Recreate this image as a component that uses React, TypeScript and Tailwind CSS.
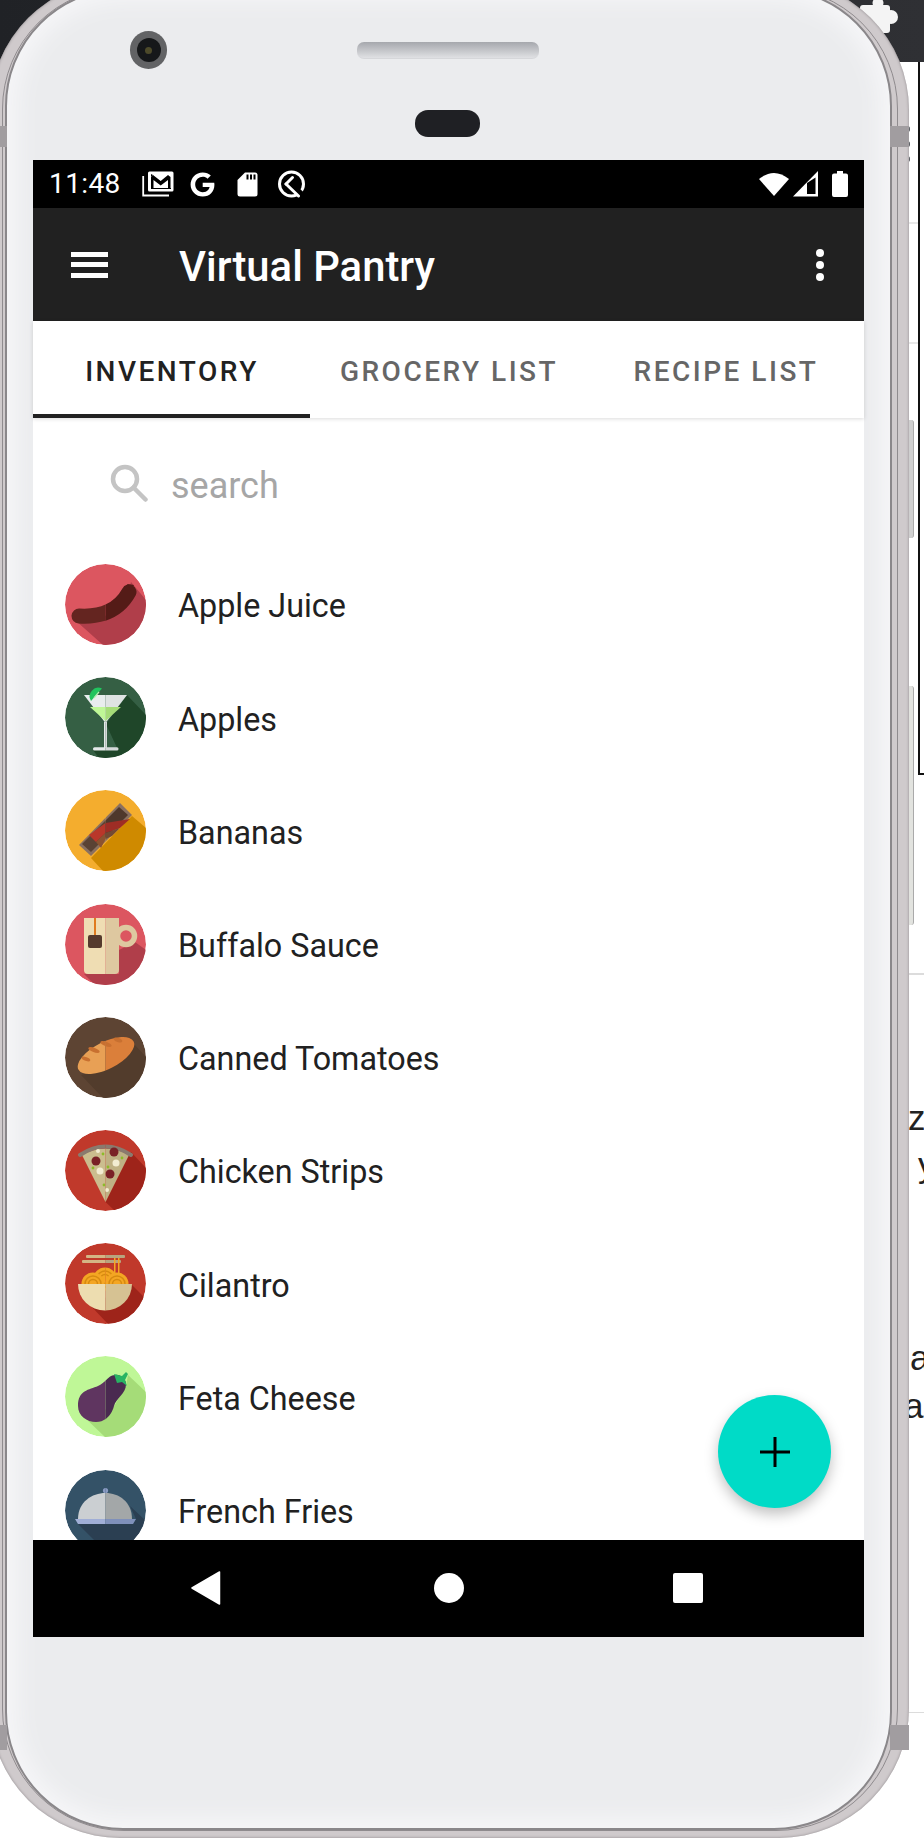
import React from "react";
import { FaGoogle } from "react-icons/fa";

const Flat = ({ id, bg, shadow, art }: { id: string; bg: string; shadow: string; art: (r: boolean) => React.ReactNode }) => (
  <svg width="81" height="81" viewBox="0 0 81 81" className="shrink-0">
    <defs>
      <clipPath id={`c-${id}`}><circle cx="40.5" cy="40.5" r="40.5" /></clipPath>
      <clipPath id={`r-${id}`}><rect x="40.5" y="0" width="41" height="81" /></clipPath>
      <clipPath id={`l-${id}`}><rect x="0" y="0" width="40.5" height="81" /></clipPath>
    </defs>
    <g clipPath={`url(#c-${id})`}>
      <circle cx="40.5" cy="40.5" r="40.5" fill={bg} />
      <polygon points={shadow} fill={bgShadow(bg)} />
      <g clipPath={`url(#l-${id})`}>{art(false)}</g>
      <g clipPath={`url(#r-${id})`}>{art(true)}</g>
    </g>
  </svg>
);

function bgShadow(bg: string) {
  const m: Record<string, string> = {
    "#dc5660": "#b03e4a",
    "#355f44": "#1f4629",
    "#f4ad2e": "#cf8a00",
    "#5d4433": "#523c2c",
    "#c0392b": "#9e241a",
    "#bff797": "#a5dc78",
    "#345267": "#2b3f52",
  };
  return m[bg];
}

const items: { name: string; icon: React.ReactNode }[] = [
  {
    name: "Apple Juice",
    icon: (
      <Flat id="a" bg="#dc5660" shadow="10,56 38,81 81,81 81,36 66,18 60,40 30,58" art={(r) => (
        <g>
          <path d="M14 52 C 30 53, 52 50, 64 28" fill="none" stroke={r ? "#541b17" : "#642520"} strokeWidth="15" strokeLinecap="round" />
          <polygon points="7,54 10,46 15,50" fill={r ? "#541b17" : "#642520"} />
          <polygon points="62,20 69,21 66,27" fill={r ? "#541b17" : "#642520"} />
        </g>
      )} />
    ),
  },
  {
    name: "Apples",
    icon: (
      <Flat id="b" bg="#355f44" shadow="62,18 81,38 81,81 34,81 28,73 53,73 41,47" art={(r) => (
        <g>
          <polygon points="19,18 62,18 40.5,46" fill={r ? "#dfe3e3" : "#e9edee"} />
          <polygon points="25,30 56,30 40.5,44" fill={r ? "#a5dc78" : "#bff797"} />
          <rect x="39" y="45" width="3" height="26" fill={r ? "#d5d9da" : "#e5e9ea"} />
          <rect x="28" y="70.3" width="25.5" height="3.2" rx="1.5" fill={r ? "#d5d9da" : "#e5e9ea"} />
          <path d="M37 11.5 A 8.7 8.7 0 0 0 26 24 Z" fill="#21c45e" />
          <path d="M34 15 L29 21" stroke="#b5efb0" strokeWidth="1.2" />
        </g>
      )} />
    ),
  },
  {
    name: "Bananas",
    icon: (
      <Flat id="c" bg="#f4ad2e" shadow="67,26 81,38 81,81 38,81 26,68" art={(r) => (
        <g>
          <polygon points="55,13 67,25 26,66 14,55" fill="#8a7060" />
          <polygon points="54,17 63,25 26,62 17,54" fill={r ? "#4f382c" : "#5a4234"} />
          <polygon points="24,45 40.5,33 65,29 55,38 40.5,43 31,52" fill={r ? "#9e2d25" : "#b9372a"} />
          <polygon points="31,52 40.5,43 55,38 47,46 40.5,49 36,58" fill={r ? "#734a33" : "#8c5330"} />
        </g>
      )} />
    ),
  },
  {
    name: "Buffalo Sauce",
    icon: (
      <Flat id="d" bg="#dc5660" shadow="70,38 81,46 81,81 30,81 19,70 54,70 54,46" art={(r) => (
        <g>
          <circle cx="61" cy="32" r="8.5" fill="none" stroke="#dec8a0" strokeWidth="5.5" />
          <path d="M19 14 H54 V66 A4 4 0 0 1 50 70 H23 A4 4 0 0 1 19 66 Z" fill={r ? "#dec8a0" : "#efddb3"} />
          <rect x="29" y="14" width="2" height="18" fill="#e07b1f" />
          <rect x="23" y="31" width="14" height="13" rx="2" fill="#553a2d" />
        </g>
      )} />
    ),
  },
  {
    name: "Canned Tomatoes",
    icon: (
      <Flat id="e" bg="#5d4433" shadow="69,27 81,40 81,81 38,81 16,58 40,52" art={(r) => (
        <g>
          <ellipse cx="41" cy="38.5" rx="31" ry="13.5" transform="rotate(-27 41 38.5)" fill={r ? "#db7f3a" : "#e8a055"} />
          <ellipse cx="21" cy="42" rx="4.5" ry="1.8" transform="rotate(20 21 42)" fill="#c87030" />
          <ellipse cx="29" cy="33" rx="6" ry="2.2" transform="rotate(20 29 33)" fill="#c87030" />
          <ellipse cx="41" cy="27" rx="6" ry="2.2" transform="rotate(20 41 27)" fill="#c87030" />
          <ellipse cx="53" cy="23" rx="4.5" ry="2" transform="rotate(20 53 23)" fill="#c87030" />
        </g>
      )} />
    ),
  },
  {
    name: "Chicken Strips",
    icon: (
      <Flat id="f" bg="#c0392b" shadow="66,22 81,38 81,81 50,81 40.5,72 64,25" art={(r) => (
        <g>
          <path d="M17 25 Q40.5 12 64 25 L40.5 72 Z" fill={r ? "#bfb184" : "#cbbd8e"} />
          <path d="M15 25 Q40.5 8 66 25" fill="none" stroke="#8a7a6e" strokeWidth="4" strokeLinecap="round" />
          <circle cx="31" cy="31" r="4.5" fill="#7a2126" />
          <circle cx="49" cy="22" r="4.5" fill="#7a2126" />
          <circle cx="45" cy="44" r="4.5" fill="#7a2126" />
          <circle cx="33" cy="21" r="2" fill="#f2ecd2" />
          <circle cx="51" cy="33" r="3.5" fill="#f2ecd2" />
          <circle cx="35" cy="41" r="3.5" fill="#f2ecd2" />
          <circle cx="42" cy="60" r="2" fill="#f2ecd2" />
          <circle cx="38" cy="24" r="1.4" fill="#8dbb28" />
          <circle cx="57" cy="28" r="1.4" fill="#8dbb28" />
          <circle cx="43" cy="37" r="1.4" fill="#8dbb28" />
          <circle cx="28" cy="38" r="1.4" fill="#8dbb28" />
          <circle cx="39" cy="55" r="1.4" fill="#8dbb28" />
        </g>
      )} />
    ),
  },
  {
    name: "Cilantro",
    icon: (
      <Flat id="g" bg="#c0392b" shadow="67,42 81,56 81,81 43,81 25,62" art={(r) => (
        <g>
          <rect x="21" y="12" width="39" height="3" rx="1" fill={r ? "#b8a47f" : "#d4b585"} />
          <rect x="17" y="17" width="39" height="3" rx="1" fill={r ? "#b8a47f" : "#d4b585"} />
          <rect x="49" y="15" width="1.5" height="20" fill="#f4a623" />
          <rect x="53" y="15" width="1.5" height="20" fill="#f4a623" />
          {[[40, 36], [28, 41], [52, 41]].map(([x, y]) => (
            <g key={x}>
              <circle cx={x} cy={y} r="11.5" fill="#f4a623" />
              <circle cx={x} cy={y} r="8" fill="none" stroke="#d68a10" strokeWidth="1.5" />
              <circle cx={x} cy={y} r="4.5" fill="none" stroke="#d68a10" strokeWidth="1.5" />
            </g>
          ))}
          <path d="M13 41 H67 A27 26.5 0 0 1 13 41 Z" fill={r ? "#d6c293" : "#edddb0"} />
        </g>
      )} />
    ),
  },
  {
    name: "Feta Cheese",
    icon: (
      <Flat id="h" bg="#bff797" shadow="63,19 81,36 81,81 40,81 16,58 48,52 61,30" art={(r) => (
        <g>
          <path d="M50 19 C44 19,41 26,33 30 C24 34,13 34,13 50 C13 60,22 66,31 66 C41 66,47 58,49 50 C51 42,62 37,61 27 C60 22,55 18,50 19Z" fill={r ? "#4a2a50" : "#5f3560"} />
          <polygon points="49,18 57,20 61,16 63,18 60,24 62,30 57,26 52,27" fill="#28b463" />
        </g>
      )} />
    ),
  },
  {
    name: "French Fries",
    icon: (
      <Flat id="i" bg="#345267" shadow="65,36 81,51 81,81 40,81 13,54 68,54 71,49" art={(r) => (
        <g>
          <path d="M13 49 C13 32,27 23,40.5 23 C54 23,67 32,67 49 Z" fill={r ? "#a3a7a8" : "#cbcfd2"} />
          <circle cx="40.5" cy="20.5" r="2.6" fill="#8a9bc4" />
          <polygon points="10,49 71,49 68,54 13,54" fill={r ? "#7f90ba" : "#a0aed6"} />
        </g>
      )} />
    ),
  },
];

const tabs = ["INVENTORY", "GROCERY LIST", "RECIPE LIST"];
const roboto = "font-['Roboto',sans-serif]";
const pageText = "absolute font-['Liberation_Sans',sans-serif] text-[35px] leading-[36px] text-[#222]";

export default function App() {
  return (
    <div className={`relative w-[924px] h-[1840px] overflow-hidden bg-white ${roboto}`}>
      {/* page behind the device */}
      <div className="absolute left-0 top-0 w-[924px] h-[62px] bg-linear-to-r from-[#202226] to-[#2f3034]" />
      <svg className="absolute left-[860px] top-0" width="40" height="36" viewBox="0 0 40 36" fill="#f4f4f4">
        <rect x="0" y="5" width="30" height="28" rx="3" />
        <circle cx="31" cy="17" r="7" />
        <circle cx="18" cy="3" r="5.5" />
      </svg>
      <div className="absolute left-[918px] top-[62px] w-[6px] h-[713px] border-l-2 border-b-2 border-[#111]" />
      <div className="absolute left-[900px] top-[222px] w-[18px] h-[2px] bg-[#e8e8e8]" />
      <div className="absolute left-[900px] top-[342px] w-[18px] h-[2px] bg-[#e8e8e8]" />
      <div className="absolute left-[900px] top-[973px] w-[24px] h-[2px] bg-[#dcdcdc]" />
      <div className="absolute left-[900px] top-[1712px] w-[24px] h-[1px] bg-[#dcdcdc]" />
      <div className={`${pageText} left-[908px] top-[1100px]`}>ze</div>
      <div className={`${pageText} left-[918px] top-[1147px]`}>y</div>
      <div className={`${pageText} left-[910px] top-[1340px]`}>a</div>
      <div className={`${pageText} left-[904px] top-[1388px]`}>ar</div>

      {/* side hardware */}
      <div className="absolute left-[900px] top-[420px] w-[14px] h-[118px] rounded-r-[3px] bg-[#cfcfcf] border-r border-[#aaa]" />
      <div className="absolute left-[900px] top-[686px] w-[14px] h-[239px] rounded-r-[3px] bg-[#e2e3df] border-r border-[#aaa]" />
      <div className="absolute left-[905px] top-[126px] w-[5px] h-[6px] rounded-full bg-[#5d6065]" />
      <div className="absolute left-[905px] top-[141px] w-[5px] h-[6px] rounded-full bg-[#5d6065]" />
      <div className="absolute left-[905px] top-[156px] w-[5px] h-[6px] rounded-full bg-[#5d6065]" />

      {/* device */}
      <div className="relative ml-[-10px] mt-[-20px] w-[919px] h-[1858px] rounded-[130px] bg-[#cfcacc] pl-[12px] pr-[11px] py-[7px] shadow-[inset_0_0_3px_#8d888b]">
        <div className="w-full h-full rounded-[122px] border border-[#8f8b8e] pl-[2px] pr-[5px]">
          <div className="w-full h-full rounded-[118px] border-2 border-[#8a878a] bg-[#ebecee] shadow-[inset_0_0_22px_10px_#f6f6f8] overflow-hidden">
            {/* sensors */}
            <div className="h-[170px] pt-[41px]">
              <div className="flex items-center h-[38px]">
                <div className="ml-[123px] w-[37px] h-[38px] rounded-full bg-[#626365] flex items-center justify-center">
                  <div className="w-[24px] h-[24px] rounded-full bg-[#16181a] flex items-center justify-center">
                    <div className="w-[7px] h-[7px] rounded-full bg-[#4d4a2a]" />
                  </div>
                </div>
                <div className="ml-[190px] w-[182px] h-[17px] rounded-[7px] bg-linear-to-b from-[#a6a8ad] to-[#e0e1e4] border-b border-b-[#d6d7da]" />
              </div>
              <div className="ml-[408px] mt-[41px] w-[65px] h-[27px] rounded-[13px] bg-[#1f2024]" />
            </div>

            {/* screen */}
            <div className="ml-[26px] w-[831px] h-[1477px] bg-white flex flex-col">
              <div className="h-[48px] shrink-0 bg-black flex items-center text-white">
                <span className="ml-[16px] w-[76px] text-[28px] leading-none tracking-[0.4px]">11:48</span>
                <svg className="ml-[17px]" width="32" height="26" viewBox="0 0 32 26">
                  <path d="M1.2 5 V24.5 H27" fill="none" stroke="#fff" strokeWidth="1.8" />
                  <rect x="6" y="0.5" width="25.5" height="20" rx="1.5" fill="#fff" />
                  <polygon points="9,6 9,18 11.5,18 11.5,9 18.7,14.5 26,9 26,18 28.5,18 28.5,6 26,4 18.7,10 11,4" fill="#000" />
                  <polygon points="9,3 9,6 11,4" fill="#000" />
                  <rect x="9" y="17" width="20" height="1" fill="#000" />
                </svg>
                <FaGoogle className="ml-[16px] text-white" size={25} />
                <svg className="ml-[22px]" width="21" height="25" viewBox="0 0 21 25">
                  <path d="M8 0.5 H18 A2.5 2.5 0 0 1 20.5 3 V22 A2.5 2.5 0 0 1 18 24.5 H3 A2.5 2.5 0 0 1 0.5 22 V8 Z" fill="#fff" />
                  <rect x="9.5" y="2.5" width="2" height="5" fill="#000" />
                  <rect x="13" y="2.5" width="2" height="5" fill="#000" />
                  <rect x="16.5" y="2.5" width="2" height="5" fill="#000" />
                </svg>
                <svg className="ml-[19px]" width="29" height="28" viewBox="0 0 29 28">
                  <circle cx="14.5" cy="14" r="12" fill="none" stroke="#fff" strokeWidth="3" />
                  <path d="M15 15 L29 29" fill="none" stroke="#000" strokeWidth="6" />
                  <path d="M15.5 7.5 L9 14" fill="none" stroke="#fff" strokeWidth="3" strokeLinecap="round" />
                  <path d="M9 14 L21.5 26" fill="none" stroke="#fff" strokeWidth="3" strokeLinecap="round" />
                </svg>
                <div className="flex-1" />
                <svg width="30" height="24" viewBox="0 0 30 24"><path d="M0 7 Q15 -5 30 7 L15 24 Z" fill="#fff" /></svg>
                <svg className="ml-[4px]" width="25" height="26" viewBox="0 0 25 26"><path d="M25 0 V25.5 H0 Z" fill="#fff" /><path d="M14 12 V23 H22.5 V6.5 Z" fill="#000" /></svg>
                <svg className="ml-[14px] mr-[16px]" width="16" height="26" viewBox="0 0 16 26"><path d="M5 0 H11 V2.5 H14 A2 2 0 0 1 16 4.5 V24 A2 2 0 0 1 14 26 H2 A2 2 0 0 1 0 24 V4.5 A2 2 0 0 1 2 2.5 H5 Z" fill="#fff" /></svg>
              </div>

              <div className="h-[113px] shrink-0 bg-[#212121] flex items-center text-white">
                <div className="ml-[38px] w-[37px] flex flex-col gap-[5.5px]">
                  <div className="h-[5px] bg-white" />
                  <div className="h-[5px] bg-white" />
                  <div className="h-[5px] bg-white" />
                </div>
                <div className="ml-[71px] pt-[4px] text-[41.8px] leading-none font-medium">Virtual Pantry</div>
                <div className="flex-1" />
                <div className="mr-[40px] flex flex-col gap-[4px]">
                  <div className="w-[8px] h-[8px] rounded-full bg-white" />
                  <div className="w-[8px] h-[8px] rounded-full bg-white" />
                  <div className="w-[8px] h-[8px] rounded-full bg-white" />
                </div>
              </div>

              <div className="relative z-10 h-[97px] shrink-0 grid grid-cols-3 bg-white shadow-[0_1px_4px_rgba(0,0,0,0.14)]">
                {tabs.map((t, i) => (
                  <div key={t} className={`flex items-center justify-center border-b-4 pt-[9px] pl-[1px] text-[28px] font-medium tracking-[2.5px] ${i === 0 ? "border-[#212121] text-[#212121]" : "border-transparent text-[#666666]"}`}>
                    {t}
                  </div>
                ))}
              </div>

              <div className="relative flex-1 min-h-0 overflow-hidden">
                <div className="h-[130px] flex items-center">
                  <svg className="ml-[77px]" width="38" height="38" viewBox="0 0 38 38" fill="none" stroke="#c4c4c4" strokeWidth="4.5">
                    <circle cx="15" cy="15" r="12" />
                    <path d="M23.5 23.5 L35.5 35.5" strokeLinecap="round" />
                  </svg>
                  <div className="ml-[23px] pt-[5px] text-[36px] leading-none text-[#a6a6a6]">search</div>
                </div>
                <div className="flex flex-col">
                  {items.map((it) => (
                    <div key={it.name} className="h-[113.2px] shrink-0 flex items-center pl-[32px]">
                      {it.icon}
                      <span className="ml-[32px] pt-[4px] text-[32.3px] leading-none text-[#212121]">{it.name}</span>
                    </div>
                  ))}
                </div>
                <div className="absolute left-[685px] top-[977px] w-[113px] h-[113px] rounded-full bg-[#00dbc7] shadow-[0_6px_14px_rgba(0,0,0,0.25)] flex items-center justify-center">
                  <svg width="30" height="30" viewBox="0 0 30 30"><path d="M13.5 0 H16.5 V13.5 H30 V16.5 H16.5 V30 H13.5 V16.5 H0 V13.5 H13.5 Z" fill="#000" /></svg>
                </div>
              </div>

              <div className="h-[97px] shrink-0 bg-black flex items-center pb-[2px]">
                <svg className="ml-[158px]" width="30" height="34" viewBox="0 0 30 34"><path d="M28.5 1 V33 L1 17 Z" fill="#fff" stroke="#fff" strokeWidth="1.5" strokeLinejoin="round" /></svg>
                <div className="ml-[213px] w-[30px] h-[30px] rounded-full bg-white" />
                <div className="ml-[209px] w-[30px] h-[30px] rounded-[2px] bg-white" />
              </div>
            </div>
          </div>
        </div>
        {/* antenna bands */}
        <div className="absolute right-0 top-[146px] w-[19px] h-[21px] bg-[#a19da0]" />
        <div className="absolute left-[10px] top-[146px] w-[7px] h-[21px] bg-[#a19da0]" />
        <div className="absolute right-0 top-[1745px] w-[19px] h-[25px] bg-[#a19da0]" />
        <div className="absolute left-[10px] top-[1745px] w-[7px] h-[25px] bg-[#a19da0]" />
      </div>
    </div>
  );
}
